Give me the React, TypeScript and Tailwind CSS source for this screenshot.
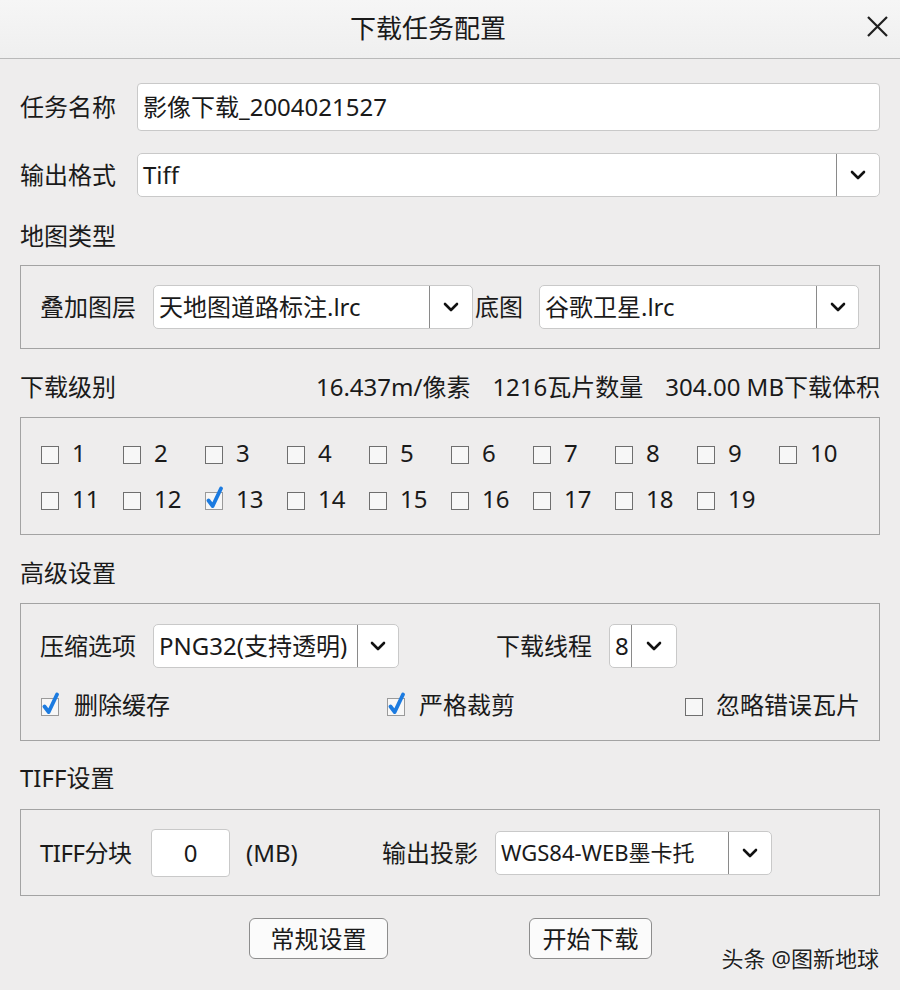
import { ReactNode } from 'react';

const font = 'font-["Noto_Sans","Noto_Sans_CJK_SC",sans-serif]';

function Chevron() {
  return (
    <svg width="16" height="10" viewBox="0 0 16 10" fill="none">
      <path d="M2 2l6 6 6-6" stroke="#111" strokeWidth="2.6" strokeLinecap="round" strokeLinejoin="round" />
    </svg>
  );
}

function Select({
  text,
  width,
  arrow = 43,
  height = 44,
  textClass = '',
}: {
  text: string;
  width: number;
  arrow?: number;
  height?: number;
  textClass?: string;
}) {
  return (
    <div
      className="flex shrink-0 bg-white border border-[#c9c9c9] rounded-[5px] overflow-hidden"
      style={{ width, height }}
    >
      <div className={`flex-1 min-w-0 flex items-center pl-[5px] whitespace-nowrap overflow-hidden ${textClass}`}>{text}</div>
      <div className="flex items-center justify-center border-l border-[#8a8a8a]" style={{ width: arrow }}>
        <Chevron />
      </div>
    </div>
  );
}

function Check({ checked }: { checked?: boolean }) {
  return (
    <svg width="22" height="26" viewBox="0 0 22 26" className="shrink-0">
      <rect x="1.5" y="6.5" width="17" height="17" fill="#f7f7f7" stroke={checked ? '#9a9a9a' : '#6f6f6f'} strokeWidth="1" />
      {checked && (
        <path d="M4.5 14.5l4.2 5.5 L17 2.5" stroke="#1c7be0" strokeWidth="3.8" fill="none" strokeLinecap="round" strokeLinejoin="round" />
      )}
    </svg>
  );
}

function CheckItem({ label, checked, gap = 'ml-[10px]' }: { label: string; checked?: boolean; gap?: string }) {
  return (
    <div className="flex items-center h-[30px]">
      <Check checked={checked} />
      <span className={gap}>{label}</span>
    </div>
  );
}

function Group({ children, className }: { children: ReactNode; className: string }) {
  return <div className={`border border-[#a3a3a3] ${className}`}>{children}</div>;
}

function SectionLabel({ children, className }: { children: ReactNode; className: string }) {
  return <div className={`h-[30px] flex items-center ${className}`}>{children}</div>;
}

export default function App() {
  const levels = Array.from({ length: 19 }, (_, i) => i + 1);

  return (
    <div className={`w-[900px] h-[990px] bg-[#eeeded] text-[#1a1a1a] text-[24px] ${font} relative overflow-hidden`}>
      {/* 标题栏 */}
      <div className="h-[59px] bg-gradient-to-b from-[#f6f6f6] to-[#efefef] border-b border-[#b9b9b9] flex items-center justify-center relative">
        <span className="text-[26px] pr-[44px] -mt-[2px]">下载任务配置</span>
        <svg className="absolute right-[11px] top-[15px]" width="23" height="23" viewBox="0 0 23 23">
          <path d="M2 2l19 19M21 2L2 21" stroke="#1f1f1f" strokeWidth="2.2" />
        </svg>
      </div>

      <div className="px-[20px]">
        {/* 任务名称 */}
        <div className="flex items-center mt-[24px] gap-[20px]">
          <span className="w-[97px] shrink-0">任务名称</span>
          <div className="flex-1 h-[48px] bg-white border border-[#c9c9c9] rounded-[4px] flex items-center pl-[5px]">
            影像下载_2004021527
          </div>
        </div>

        {/* 输出格式 */}
        <div className="flex items-center mt-[22px] gap-[20px]">
          <span className="w-[97px] shrink-0">输出格式</span>
          <div className="flex-1 flex">
            <Select text="Tiff" width={743} arrow={43} />
          </div>
        </div>

        <SectionLabel className="mt-[24px]">地图类型</SectionLabel>
        <Group className="mt-[14px] h-[84px] flex items-center pl-[19px]">
          <span className="w-[96px] shrink-0">叠加图层</span>
          <div className="ml-[17px]">
            <Select text="天地图道路标注.lrc" width={320} arrow={43} />
          </div>
          <span className="ml-[2px] w-[64px] shrink-0">底图</span>
          <Select text="谷歌卫星.lrc" width={320} arrow={42} />
        </Group>

        {/* 下载级别 */}
        <div className="mt-[23px] h-[30px] flex items-center justify-between">
          <span>下载级别</span>
          <div className="flex gap-[22px]">
            <span>16.437m/像素</span>
            <span>1216瓦片数量</span>
            <span>304.00 MB下载体积</span>
          </div>
        </div>
        <Group className="mt-[15px] h-[118px] pl-[19px] pt-[20px]">
          <div className="grid grid-cols-[repeat(10,82px)] gap-y-[16px]">
            {levels.map((n) => (
              <CheckItem key={n} label={String(n)} checked={n === 13} gap="ml-[10px]" />
            ))}
          </div>
        </Group>

        {/* 高级设置 */}
        <SectionLabel className="mt-[23px]">高级设置</SectionLabel>
        <Group className="mt-[15px] h-[138px] pl-[19px] pt-[20px]">
          <div className="flex items-center">
            <span className="w-[96px] shrink-0">压缩选项</span>
            <div className="ml-[17px]">
              <Select text="PNG32(支持透明)" width={246} arrow={41} height={44} />
            </div>
            <span className="ml-[97px] w-[96px] shrink-0">下载线程</span>
            <div className="ml-[17px]">
              <Select text="8" width={68} arrow={45} height={44} />
            </div>
          </div>
          <div className="flex items-center mt-[22px]">
            <div className="w-[346px]">
              <CheckItem label="删除缓存" checked gap="ml-[12px]" />
            </div>
            <div className="w-[298px]">
              <CheckItem label="严格裁剪" checked gap="ml-[11px]" />
            </div>
            <CheckItem label="忽略错误瓦片" gap="ml-[10px]" />
          </div>
        </Group>

        {/* TIFF设置 */}
        <SectionLabel className="mt-[22px]">TIFF设置</SectionLabel>
        <Group className="mt-[16px] h-[87px] flex items-center pl-[19px]">
          <span className="w-[96px] shrink-0 whitespace-nowrap tracking-[-0.5px]">TIFF分块</span>
          <div className="ml-[15px] w-[79px] h-[48px] bg-white border border-[#c9c9c9] rounded-[4px] flex items-center justify-center">
            0
          </div>
          <span className="ml-[16px] w-[136px] shrink-0">(MB)</span>
          <span className="w-[96px] shrink-0">输出投影</span>
          <div className="ml-[17px]">
            <Select text="WGS84-WEB墨卡托" width={277} arrow={43} height={44} textClass="text-[22px]" />
          </div>
        </Group>

        {/* 按钮 */}
        <div className="flex mt-[22px] pl-[229px]">
          <button className="w-[139px] h-[41px] bg-[#fbfbfb] border border-[#8d8d8d] rounded-[6px] flex items-center justify-center">
            常规设置
          </button>
          <button className="ml-[141px] w-[123px] h-[41px] bg-[#fbfbfb] border border-[#8d8d8d] rounded-[6px] flex items-center justify-center">
            开始下载
          </button>
        </div>
      </div>

      <div className="absolute right-[21px] top-[942px] text-[22px] text-[#222] [text-shadow:0_0_2px_#fff,0_0_1px_#fff]">
        头条 @图新地球
      </div>
    </div>
  );
}
